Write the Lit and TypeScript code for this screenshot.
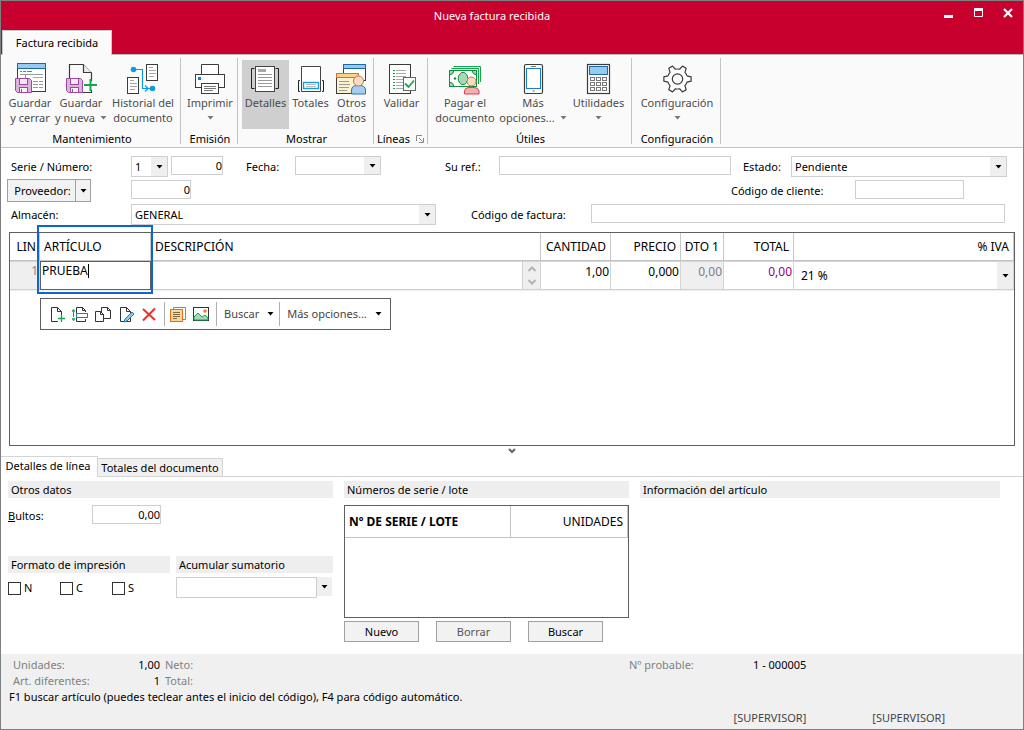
import { LitElement, html, svg, css, nothing, TemplateResult, SVGTemplateResult } from "lit";
import { customElement, property } from "lit/decorators.js";

/** Outline of a cog with six teeth around (cx, cy). */
function gearPath(cx: number, cy: number): string {
  const at = (r: number, deg: number) => {
    const a = (deg * Math.PI) / 180;
    return `${(cx + r * Math.cos(a)).toFixed(2)} ${(cy + r * Math.sin(a)).toFixed(2)}`;
  };
  let d = "";
  for (let t = 0; t < 360; t += 60) {
    d += `${t ? "A10 10 0 0 1" : "M"}${at(10, t - 18)}L${at(13.8, t - 9)}L${at(13.8, t + 9)}L${at(10, t + 18)}`;
  }
  return `${d}A10 10 0 0 1 ${at(10, -18)}Z`;
}

const floppy = svg`
  <g stroke="#9a4a9c" stroke-width="1">
    <path d="M1.500 16.500H15.500L17.500 18.500V30.500H3.500L1.500 28.500Z" fill="#ddb3dd"/>
    <rect x="5.500" y="16.500" width="8" height="6" fill="#f4e6f4"/>
    <rect x="5.500" y="25.500" width="8" height="5" fill="#f4f4f4"/>
    <path d="M7.500 27V30"/>
  </g>`;

const icons: Record<string, SVGTemplateResult> = {
  saveClose: svg`
    <rect x="3.500" y="1.500" width="28" height="28" fill="#fff" stroke="#3b3b3b"/>
    <rect x="3.500" y="1.500" width="28" height="5" fill="#97caf0" stroke="#1c68a8"/>
    <path d="M6 9.500H8M9 9.500H12M13 9.500H18" stroke="#777"/>
    <path d="M6 12.500H29" stroke="#999"/><path d="M11.500 12V17" stroke="#999"/>
    <path d="M19 15.500H29" stroke="#aaa"/>
    <path d="M19 19.500H24M25 19.500H29M19 22.500H24M25 22.500H29M19 25.500H24M25 25.500H29" stroke="#999"/>
    ${floppy}`,
  saveNew: svg`
    <path d="M4.500 16V2.500H18L26.500 11V19M18 30.500H26.500V28" fill="none" stroke="#3b3b3b" stroke-width="1.200"/>
    <path d="M18.500 2.500V10.500H26.500" fill="#eee" stroke="#3b3b3b" stroke-width="1.200"/>
    ${floppy}
    <path d="M25.500 17V29M19 23H32" stroke="#12a84a" stroke-width="2"/>`,
  history: svg`
    <rect x="19.500" y="2.500" width="11" height="16" fill="#fff" stroke="#3b3b3b"/>
    <path d="M22 5.500H26M22 8.500H29M22 11.500H29M22 14.500H27" stroke="#a5a5a5"/>
    <rect x="0.500" y="15.500" width="11" height="16" fill="#fff" stroke="#3b3b3b"/>
    <path d="M3 18.500H7M3 21.500H10M3 24.500H10M3 27.500H8" stroke="#a5a5a5"/>
    <circle cx="6.500" cy="7.500" r="2.800" fill="#0a9be6"/>
    <circle cx="25.500" cy="26.500" r="2.800" fill="#0a9be6"/>
    <path d="M7 7.500H15.500V26.500H25M18 23.500L21 26.500L18 29.500" fill="none" stroke="#0a9be6" stroke-width="1.200"/>`,
  print: svg`
    <path d="M7.500 12V2.500H24.500V12" fill="#fff" stroke="#3b3b3b"/>
    <rect x="1.500" y="12.500" width="29" height="13" fill="#fff" stroke="#3b3b3b"/>
    <rect x="4" y="15" width="3" height="3" fill="#1a80c4"/>
    <rect x="7.500" y="21.500" width="17" height="10" fill="#fff" stroke="#3b3b3b"/>
    <path d="M10 24.500H22M10 26.500H22M10 28.500H19" stroke="#777"/>`,
  details: svg`
    <path d="M5.500 6.500H2.500V26.500H5.500M26.500 6.500H29.500V26.500H26.500" fill="none" stroke="#222"/>
    <rect x="6.500" y="4.500" width="19" height="25" fill="#fff" stroke="#444"/>
    <rect x="9" y="7" width="8" height="3" fill="#a9a9a9"/>
    <path d="M9 12.500H23M9 15.500H23M9 18.500H23M9 21.500H23M9 24.500H23" stroke="#999"/>`,
  totals: svg`
    <path d="M7.500 29.500V4.500H26.500V29.500Z" fill="#fff" stroke="#444"/>
    <path d="M6 18.500H4.500V29.500H6M28 18.500H29.500V29.500H28" fill="none" stroke="#222"/>
    <rect x="9.500" y="20.500" width="15" height="6" fill="#fff" stroke="#1a9be0" stroke-width="1.400"/>
    <path d="M12 22.500H22M12 24.500H22" stroke="#bbb"/>`,
  other: svg`
    <rect x="8.500" y="2.500" width="22" height="16" fill="#fff" stroke="#3b3b3b"/>
    <rect x="8.500" y="2.500" width="22" height="4" fill="#97caf0" stroke="#1c68a8"/>
    <rect x="1.500" y="11.500" width="21" height="20" fill="#fdf1cf" stroke="#3b3b3b"/>
    <rect x="1.500" y="11.500" width="22" height="4" fill="#fbcf8c" stroke="#e0701c"/>
    <path d="M4 19.500H14M4 22.500H15M4 25.500H14M4 28.500H12" stroke="#999"/>
    <path d="M16.500 32V28Q17 23.500 22 23.500H25Q30 23.500 30.500 28V32Z" fill="#a5cdf0" stroke="#2a75b5"/>
    <circle cx="23.500" cy="19" r="5" fill="#fbdcc0" stroke="#c07a4a"/>`,
  validate: svg`
    <rect x="4.500" y="2.500" width="21" height="29" fill="#fff" stroke="#3b3b3b"/>
    <path d="M8 8.500H10M8 14.500H10M8 20.500H10M8 26.500H10" stroke="#12a84a"/>
    <path d="M8 11.500H10M8 17.500H10M8 23.500H10" stroke="#d03030"/>
    <path d="M11 8.500H21M11 11.500H21M11 14.500H21M11 17.500H18M11 20.500H18M11 23.500H18M11 26.500H18" stroke="#aaa"/>
    <rect x="18.500" y="15.500" width="12" height="13" fill="#fff" stroke="#666"/>
    <path d="M20 21.500L23.500 25L29 18.500" fill="none" stroke="#12a84a" stroke-width="1.800"/>`,
  pay: svg`
    <path d="M4.500 4.500H31.500V20M2.500 6.500H29.500V22" fill="none" stroke="#12a84a"/>
    <rect x="0.500" y="8.500" width="27" height="16" fill="#fff" stroke="#0f8f3e"/>
    <path d="M0.500 8.500H5Q4.500 12.500 0.500 13ZM27.500 8.500H23Q23.500 12.500 27.500 13ZM0.500 24.500H5Q4.500 20.500 0.500 20Z" fill="#9ed3ae" stroke="#0f8f3e"/>
    <circle cx="6" cy="16.500" r="1.200" fill="#0f8f3e"/>
    <ellipse cx="14" cy="16.500" rx="4.800" ry="6.200" fill="#a7d7b4" stroke="#0f8f3e"/>
    <path d="M15.500 32V29Q16 25.500 20 25.500H25Q29.500 25.500 30 29V32Z" fill="#f4b0b0" stroke="#d84545"/>
    <circle cx="22.500" cy="19.500" r="4.500" fill="#fbdcc0" stroke="#c07a4a"/>`,
  phone: svg`
    <rect x="7.500" y="2.500" width="18" height="29" rx="1.500" fill="#fff" stroke="#3b3b3b" stroke-width="1.200"/>
    <rect x="9.500" y="6.500" width="14" height="20" fill="#fff" stroke="#1a80c4"/>
    <path d="M14 4.500H19M15.500 29H18" stroke="#777"/>`,
  calc: svg`
    <rect x="5.500" y="2.500" width="22" height="29" fill="#fff" stroke="#3b3b3b" stroke-width="1.200"/>
    <rect x="7.500" y="4.500" width="18" height="8" fill="#97caf0" stroke="#1c68a8"/>
    <g fill="#fff" stroke="#777">${[15.5, 20.5, 25.5].map((y) => [8.5, 14.5, 20.5].map((x) => svg`<rect x=${x} y=${y} width="4" height="3"/>`))}</g>`,
  gear: svg`
    <path d=${gearPath(16.5, 17)} fill="#fff" stroke="#3b3b3b" stroke-width="1.200" stroke-linejoin="round"/>
    <circle cx="16.500" cy="17" r="5.200" fill="#fafafa" stroke="#3b3b3b" stroke-width="1.200"/>`,
};

const page = svg`<path d="M2.500 1.500H8.500L12.500 5.500V15.500H2.500Z" fill="#fff" stroke="#333"/><path d="M8.500 1.500V5.500H12.500" fill="none" stroke="#333"/>`;
const smallIcons: Record<string, SVGTemplateResult> = {
  add: svg`${page}<rect x="9" y="9" width="7" height="7" fill="#fff"/><path d="M12.500 9V16M9 12.500H16" stroke="#12a84a" stroke-width="1.300"/>`,
  insert: svg`<path d="M4.500 7V1.500H10.500L13.500 4.500V6M4.500 12V15.500H13.500V13" fill="none" stroke="#333"/><path d="M10.500 1.500V4.500H13.500" fill="none" stroke="#333"/>
    <rect x="4.500" y="7.500" width="11" height="4" fill="#fff" stroke="#1a80c4"/><path d="M1.500 6V11" stroke="#12a84a"/><path d="M0 5.500H3L1.500 3ZM0 12.500H3L1.500 15Z" fill="#12a84a" stroke="#12a84a" stroke-width="0.600"/>`,
  copy: svg`<path d="M6.500 1.500H12.500L15.500 4.500V12.500H6.500Z" fill="#fff" stroke="#333"/><path d="M12.500 1.500V4.500H15.500" fill="none" stroke="#333"/>
    <path d="M0.500 5.500H5.500L8.500 8.500V15.500H0.500Z" fill="#fff" stroke="#333"/><path d="M5.500 5.500V8.500H8.500" fill="none" stroke="#333"/>`,
  edit: svg`${page}<path d="M14 6L7 13L6 16L9 15L16 8Z" fill="#8cc6f0" stroke="#1a80c4"/>`,
  remove: svg`<path d="M2 3L14 14M14 2.500L2 14.500" stroke="#e8302c" stroke-width="2"/>`,
  notes: svg`<path d="M3.500 3V1.500H15.500V13.500H13" fill="#fff" stroke="#e0701c"/><rect x="0.500" y="3.500" width="12" height="12" fill="#fbd694" stroke="#e0701c"/><path d="M3 6.500H10M3 8.500H10M3 10.500H10M3 12.500H7" stroke="#7d6a45"/>`,
  image: svg`<rect x="0.500" y="1.500" width="15" height="13" fill="#fff" stroke="#333"/><path d="M1 11L5 7L9 11L12 9L15 12V14H1Z" fill="#a5dab5" stroke="#12a84a"/><circle cx="12" cy="5" r="1.800" fill="#f08020"/>`,
};

const arrow = () =>
  html`<svg class="arrow" width="7" height="4" viewBox="0 0 7 4" aria-hidden="true"><path d="M0.500 0H6.500L3.500 3.500Z" fill="currentColor" /></svg>`;

/** Large ribbon command: icon over one or two lines of text. */
@customElement("ribbon-button")
export class RibbonButton extends LitElement {
  @property() icon = "";
  @property() first = "";
  @property() second = "";
  @property({ type: Boolean }) menu = false;
  @property({ type: Boolean }) active = false;

  static styles = css`
    :host { display: block; }
    button {
      display: flex; flex-direction: column; align-items: center;
      width: 100%; height: 69px; padding: 2px 0 0; border: 0;
      background: none; color: #4c4c4c;
      font: 11px/15px "Noto Sans", "Open Sans", sans-serif; white-space: nowrap;
    }
    button.active { background: #cfcfcf; }
    svg.icon { display: block; flex: none; }
    .line { display: flex; align-items: center; justify-content: center; gap: 5px; height: 15px; }
    .arrow { color: #777; }
  `;

  render() {
    return html`<button type="button" class=${this.active ? "active" : ""} aria-pressed=${this.active}>
      <svg class="icon" width="33" height="33" viewBox="0 0 33 33" aria-hidden="true">${icons[this.icon]}</svg>
      <span class="line">${this.first}</span>
      <span class="line">${this.second}${this.menu ? arrow() : nothing}</span>
    </button>`;
  }
}

interface Command { icon: string; first: string; second?: string; menu?: boolean; active?: boolean; }
interface Group { name: string; cls: string; launcher?: boolean; commands: Command[]; }

const groups: Group[] = [
  { name: "Mantenimiento", cls: "g-main", commands: [
    { icon: "saveClose", first: "Guardar", second: "y cerrar" },
    { icon: "saveNew", first: "Guardar", second: "y nueva", menu: true },
    { icon: "history", first: "Historial del", second: "documento" }] },
  { name: "Emisión", cls: "g-one", commands: [{ icon: "print", first: "Imprimir", menu: true }] },
  { name: "Mostrar", cls: "g-show", commands: [
    { icon: "details", first: "Detalles", active: true },
    { icon: "totals", first: "Totales" },
    { icon: "other", first: "Otros", second: "datos" }] },
  { name: "Líneas", cls: "g-lines", launcher: true, commands: [{ icon: "validate", first: "Validar" }] },
  { name: "Útiles", cls: "g-tools", commands: [
    { icon: "pay", first: "Pagar el", second: "documento" },
    { icon: "phone", first: "Más", second: "opciones...", menu: true },
    { icon: "calc", first: "Utilidades", menu: true }] },
  { name: "Configuración", cls: "g-conf", commands: [{ icon: "gear", first: "Configuración", menu: true }] },
];

@customElement("app-root")
export class AppRoot extends LitElement {
  static styles = css`
    :host {
      display: flex; flex-direction: column; box-sizing: border-box; min-height: 100vh;
      border: 1px solid #7f7f7f; background: #fff; color: #000;
      font: 11px/16px "Noto Sans", "Open Sans", sans-serif;
    }
    *, *::before, *::after { box-sizing: border-box; }
    button, input, select { font: inherit; color: inherit; border-radius: 0; margin: 0; }
    .arrow { display: block; flex: none; }

    .top { background: #c8002d; color: #fff; border-bottom: 1px solid #b8b8b8; }
    .title-row { display: grid; grid-template-columns: 1fr auto 1fr; height: 29px; align-items: center; }
    .title { grid-column: 2; margin: 0; font-size: 11px; font-weight: 400; padding-right: 40px; }
    .window-buttons { justify-self: end; display: flex; gap: 12px; padding: 0 6px 6px 0; }
    .window-buttons button { width: 18px; height: 16px; padding: 0; border: 0; background: none; display: grid; place-items: center; }
    .ribbon-tab { display: block; margin: 0 0 -1px 1px; height: 25px; width: 110px; padding: 0; border: 1px solid #c8c8c8; border-bottom: 0; background: #fafafa; color: #000; }

    .ribbon { display: flex; height: 93px; padding-top: 3px; background: #fafafa; border-bottom: 1px solid #c3c3c3; }
    .group { display: flex; flex-direction: column; height: 86px; padding: 2px 2px 0 4px; border-right: 1px solid #c3c3c3; }
    .commands { display: grid; }
    .g-main .commands { grid-template-columns: 50px 52px 72px; }
    .g-main { padding-right: 1px; }
    .g-one .commands { grid-template-columns: 50px; }
    .g-show .commands { grid-template-columns: 47px 43px 39px; }
    .g-lines .commands { grid-template-columns: 47px; }
    .g-tools .commands { grid-template-columns: 66px 70px 61px; }
    .g-conf .commands { grid-template-columns: 82px; }
    .group-name { display: flex; justify-content: center; align-items: center; gap: 6px; height: 16px; margin-top: 2px; white-space: nowrap; }
    .g-lines .group-name { margin-left: -2px; }
    .launcher { width: 8px; height: 8px; padding: 0; border: 0; background: none; display: block; }
    .launcher svg { display: block; }

    .form { display: flex; flex-direction: column; gap: 3px; padding: 8px 16px 0 6px; }
    .row { display: flex; align-items: center; height: 21px; }
    .row label { white-space: nowrap; flex: none; }
    .l-first { width: 120px; margin-left: 4px; }
    .l-date { width: 49px; margin-left: 23px; }
    .l-ref { width: 54px; margin-left: 64px; }
    .l-state { width: 48px; margin-left: 12px; }
    .l-invoice { width: 120px; margin-left: 35px; }
    .l-client { width: 124px; margin-left: auto; }
    .field { height: 19px; padding: 0 2px; border: 1px solid #cfcfcf; background: #fff; outline: 0; min-width: 0; line-height: 16px; }
    .row > .field { align-self: flex-start; }
    .num { text-align: right; padding-right: 0; }
    .w-number { width: 52px; margin-left: 3px; }
    .w-supplier { width: 60px; margin-left: 40px; }
    .w-client { width: 109px; margin-right: 43px; }
    .grow { flex: 1; }
    .w-invoice { margin-right: 2px; }

    .combo { display: grid; grid-template-columns: 1fr 16px; height: 21px; border: 1px solid #cfcfcf; background: #fff; flex: none; }
    .combo select { grid-area: 1 / 1 / 2 / 3; width: 100%; min-width: 0; appearance: none; border: 0; background: none; padding: 0 16px 0 3px; outline: 0; }
    .combo .drop { grid-area: 1 / 2; background: #efefef; display: grid; place-items: center; pointer-events: none; }
    .w-series { width: 37px; }
    .w-date { width: 86px; height: 19px; align-self: flex-start; }
    .w-state { width: 216px; }
    .w-store { width: 305px; }
    .split { display: flex; height: 23px; flex: none; border: 1px solid #a0a0a0; background: #f2f2f2; }
    .split button { border: 0; background: none; padding: 0; display: grid; place-items: center; }
    .split .main { width: 67px; padding-left: 2px; }
    .split .more { width: 15px; border-left: 1px solid #a0a0a0; }

    .lines { flex: 1; margin: 7px 8px 0; border: 1px solid #5f5f5f; min-height: 200px; }
    table { border-collapse: separate; border-spacing: 0; table-layout: fixed; width: 100%; }
    th { font-weight: 400; font-size: 12px; padding: 0; }
    td { padding: 0; }
    .lines th { height: 28px; text-align: right; padding-right: 4px; border-right: 1px solid #c8c8c8; border-bottom: 1px solid #c3c3c3; white-space: nowrap; }
    .lines th.left { text-align: left; padding-left: 4px; padding-right: 0; }
    .lines th.lin { padding-right: 3px; }
    .lines td { height: 29px; border: 1px solid #d4d4d4; border-left: 0; border-bottom: 1px solid #cfcfcf; font-size: 12px; vertical-align: top; }
    .lines tbody tr { background: #fff; }
    .lines .under td { height: 1px; background: #efefef; border: 0; }
    .c-lin { width: 30px; } .c-art { width: 111px; } .c-qty { width: 70px; } .c-price { width: 70px; }
    .c-dto { width: 43px; } .c-total { width: 70px; } .c-iva { width: 220px; }
    .lines td.lin { background: #efefef; color: #8a8a8a; text-align: right; line-height: 18px; padding-right: 1px; }
    .lines td.article { border: 1px solid #5f5f5f; }
    .lines td.grey { background: #efefef; color: #808080; }
    .lines td.purple { color: #8b008b; }
    .cell { width: 100%; height: 18px; border: 0; padding: 0 1px; background: none; outline: 0; text-align: right; display: block; }
    .typing { display: flex; align-items: center; height: 18px; padding-left: 1px; }
    .typing input { field-sizing: content; min-width: 8px; border: 0; padding: 0; background: none; outline: 0; height: 16px; }
    .typing i { width: 1px; height: 14px; background: #000; }
    .desc { display: grid; grid-template-columns: 1fr 17px; height: 27px; background: #efefef; }
    .desc input { border: 0; border-right: 1px solid #cfcfcf; background: #fff; height: 27px; min-width: 0; outline: 0; }
    .spin { display: grid; grid-template-rows: 1fr 1fr; }
    .spin button { border: 0; background: none; padding: 0; display: grid; place-items: center; }
    .tax { border: 0; height: 27px; }
    .tax select { padding-left: 7px; }
    .marked { position: relative; }
    .marker { position: absolute; left: -3px; top: -8px; width: 116px; height: 69px; border: 2px solid #0a66d2; pointer-events: none; }

    .line-tools { display: flex; align-items: center; width: fit-content; height: 32px; margin: 7px 0 0 30px; padding: 0 8px; border: 1px solid #5f5f5f; background: #fff; color: #444; }
    .line-tools button { border: 0; background: none; padding: 0; display: flex; align-items: center; height: 24px; }
    .line-tools .arrow { color: #000; }
    .tool-set { display: flex; gap: 7px; padding: 0 7px 0 0; }
    .tool-set + .tool-set, .text-tool { border-left: 1px solid #b0b0b0; }
    .tool-set + .tool-set { padding-left: 5px; padding-right: 7px; }
    .text-tool { padding: 0 5px 0 7px; }
    .text-tool:last-child { padding-right: 0; }
    .line-tools .text-tool button { gap: 8px; }

    .collapse { align-self: center; height: 10px; width: 20px; padding: 0; border: 0; background: none; display: grid; place-items: center; }
    .tabs { display: flex; align-items: flex-end; border-bottom: 1px solid #d4d4d4; height: 21px; }
    .tabs button { padding: 0; background: #f0f0f0; border: 1px solid #d4d4d4; border-bottom: 0; height: 18px; width: 126px; margin-left: -1px; white-space: nowrap; }
    .tabs button.current { background: #fff; width: 97px; height: 21px; margin: 0 0 -1px; border-left: 0; padding: 0 2px 2px 0; }

    .panels { display: grid; grid-template-columns: 325px 285px 1fr; column-gap: 11px; padding: 4px 23px 12px 7px; }
    h3 { margin: 0; height: 17px; padding: 0 3px; font-size: 11px; line-height: 18px; font-weight: 400; background: #eee; white-space: nowrap; }
    .bultos { display: flex; height: 19px; margin-top: 7px; }
    .bultos label { width: 84px; line-height: 22px; }
    .w-bultos { width: 69px; }
    .halves { display: grid; grid-template-columns: 162px 157px; column-gap: 6px; margin-top: 32px; }
    .checks { display: grid; grid-template-columns: repeat(3, 52px); margin-top: 7px; }
    .checks label { display: flex; align-items: center; gap: 3px; height: 16px; }
    .checks input { appearance: none; width: 13px; height: 13px; border: 1px solid #333; background: #fff; }
    .sum { display: grid; grid-template-columns: 141px 15px; margin-top: 4px; height: 21px; }
    .sum select { grid-area: 1 / 1; appearance: none; border: 1px solid #cfcfcf; background: #fff; }
    .sum .drop { grid-area: 1 / 2; height: 19px; background: #efefef; display: grid; place-items: center; }
    .serial-box { margin-top: 7px; height: 113px; border: 1px solid #5f5f5f; }
    .serial-box th { height: 32px; text-align: right; padding: 0 4px; border-right: 1px solid #c3c3c3; border-bottom: 1px solid #c3c3c3; }
    .serial-box th.strong { text-align: left; font-weight: 700; }
    .c-serial { width: 166px; }
    .actions { display: flex; gap: 17px; margin-top: 3px; }
    .actions button { width: 75px; height: 21px; padding: 1px 0 0; border: 1px solid #a0a0a0; background: #f2f2f2; }
    .actions button:disabled { color: #555; }

    .status { background: #f0f0f0; padding: 3px 0 2px 8px; color: #808080; height: 75px; }
    .status b { font-weight: 400; color: #000; }
    .sums { display: grid; grid-template-columns: 78px 69px 469px 124px 1fr; padding-left: 4px; }
    .sums b.right { text-align: right; }
    .sums .pad { padding-left: 5px; }
    .hint { margin: 0; color: #000; }
    .users { display: flex; justify-content: flex-end; gap: 66px; margin: 5px 78px 0 0; color: #444; }
  `;

  private combo(id: string, cls: string, value = "", label = ""): TemplateResult {
    return html`<span class="combo ${cls}">
      <select id=${id} aria-label=${label || nothing}><option>${value}</option></select>
      <span class="drop">${arrow()}</span>
    </span>`;
  }

  private tool(icon: string, label: string): TemplateResult {
    return html`<button type="button" aria-label=${label}><svg width="16" height="17" viewBox="0 0 16 17" aria-hidden="true">${smallIcons[icon]}</svg></button>`;
  }

  render() {
    return html`
      <header class="top">
        <div class="title-row">
          <h1 class="title">Nueva factura recibida</h1>
          <div class="window-buttons">
            <button type="button" aria-label="Minimizar"><svg width="9" height="10"><path d="M0 7H9V10H0Z" fill="#fff" /></svg></button>
            <button type="button" aria-label="Maximizar"><svg width="9" height="9"><path d="M0.500 1V8.500H8.500V1" fill="none" stroke="#fff" /><path d="M0 0H9V3H0Z" fill="#fff" /></svg></button>
            <button type="button" aria-label="Cerrar"><svg width="10" height="10"><path d="M1 1L9 9M9 1L1 9" stroke="#fff" stroke-width="2.200" /></svg></button>
          </div>
        </div>
        <button type="button" class="ribbon-tab">Factura recibida</button>
      </header>

      <nav class="ribbon">
        ${groups.map((g) => html`<section class="group ${g.cls}">
          <div class="commands">${g.commands.map((c) => html`<ribbon-button .icon=${c.icon} .first=${c.first} .second=${c.second ?? ""} .menu=${!!c.menu} .active=${!!c.active}></ribbon-button>`)}</div>
          <div class="group-name">${g.name}${g.launcher
            ? html`<button type="button" class="launcher" aria-label="Opciones de líneas"><svg width="8" height="8"><path d="M0.500 6V0.500H6M3 3L6.500 6.500M7.500 3V7.500H3" fill="none" stroke="#888" /></svg></button>`
            : nothing}</div>
        </section>`)}
      </nav>

      <form class="form" @submit=${(e: Event) => e.preventDefault()}>
        <div class="row">
          <label class="l-first" for="serie">Serie / Número:</label>
          ${this.combo("serie", "w-series", "1")}
          <input class="field num w-number" aria-label="Número" value="0" />
          <label class="l-date" for="fecha">Fecha:</label>
          ${this.combo("fecha", "w-date")}
          <label class="l-ref" for="ref">Su ref.:</label>
          <input class="field grow" id="ref" />
          <label class="l-state" for="estado">Estado:</label>
          ${this.combo("estado", "w-state", "Pendiente")}
        </div>
        <div class="row">
          <span class="split">
            <button type="button" class="main">Proveedor:</button>
            <button type="button" class="more" aria-label="Más acciones de proveedor">${arrow()}</button>
          </span>
          <input class="field num w-supplier" aria-label="Proveedor" value="0" />
          <label class="l-client" for="cliente">Código de cliente:</label>
          <input class="field w-client" id="cliente" />
        </div>
        <div class="row">
          <label class="l-first" for="almacen">Almacén:</label>
          ${this.combo("almacen", "w-store", "GENERAL")}
          <label class="l-invoice" for="factura">Código de factura:</label>
          <input class="field grow w-invoice" id="factura" />
        </div>
      </form>

      <section class="lines">
        <table>
          <colgroup><col class="c-lin" /><col class="c-art" /><col /><col class="c-qty" /><col class="c-price" /><col class="c-dto" /><col class="c-total" /><col class="c-iva" /></colgroup>
          <thead><tr>
            <th class="lin">LIN</th>
            <th class="left marked">ARTÍCULO<span class="marker"></span></th>
            <th class="left">DESCRIPCIÓN</th>
            <th>CANTIDAD</th><th>PRECIO</th><th>DTO 1</th><th>TOTAL</th><th>% IVA</th>
          </tr></thead>
          <tbody>
            <tr>
              <td class="lin">1</td>
              <td class="article"><span class="typing"><input aria-label="Artículo" size="6" value="PRUEBA" /><i></i></span></td>
              <td><span class="desc"><input aria-label="Descripción" />
                <span class="spin">
                  <button type="button" aria-label="Subir"><svg width="8" height="6"><path d="M0.500 5L4 1.500L7.500 5" fill="none" stroke="#b4b4b4" stroke-width="2" /></svg></button>
                  <button type="button" aria-label="Bajar"><svg width="8" height="6"><path d="M0.500 1L4 4.500L7.500 1" fill="none" stroke="#b4b4b4" stroke-width="2" /></svg></button>
                </span></span></td>
              <td><input class="cell" aria-label="Cantidad" value="1,00" /></td>
              <td><input class="cell" aria-label="Precio" value="0,000" /></td>
              <td class="grey"><input class="cell" aria-label="Descuento 1" value="0,00" /></td>
              <td class="purple"><input class="cell" aria-label="Total" value="0,00" /></td>
              <td>${this.combo("iva", "tax", "21 %", "% IVA")}</td>
            </tr>
            <tr class="under"><td colspan="8"></td></tr>
          </tbody>
        </table>
        <div class="line-tools" role="toolbar">
          <span class="tool-set">
            ${this.tool("add", "Nueva línea")}${this.tool("insert", "Insertar línea")}${this.tool("copy", "Duplicar")}${this.tool("edit", "Editar")}${this.tool("remove", "Borrar línea")}
          </span>
          <span class="tool-set">${this.tool("notes", "Notas")}${this.tool("image", "Imagen")}</span>
          <span class="text-tool"><button type="button">Buscar ${arrow()}</button></span>
          <span class="text-tool"><button type="button">Más opciones... ${arrow()}</button></span>
        </div>
      </section>

      <button type="button" class="collapse" aria-label="Contraer detalles"><svg width="8" height="6"><path d="M1 1L4 4L7 1" fill="none" stroke="#666" stroke-width="2" /></svg></button>

      <div class="tabs" role="tablist">
        <button type="button" role="tab" aria-selected="true" class="current">Detalles de línea</button>
        <button type="button" role="tab" aria-selected="false">Totales del documento</button>
      </div>
      <div class="panels">
        <section>
          <h3>Otros datos</h3>
          <div class="bultos"><label for="bultos"><u>B</u>ultos:</label><input class="field num w-bultos" id="bultos" value="0,00" /></div>
          <div class="halves">
            <div>
              <h3>Formato de impresión</h3>
              <div class="checks">${["N", "C", "S"].map((k) => html`<label><input type="checkbox" />${k}</label>`)}</div>
            </div>
            <div>
              <h3>Acumular sumatorio</h3>
              <div class="sum"><select aria-label="Acumular sumatorio"><option></option></select><span class="drop">${arrow()}</span></div>
            </div>
          </div>
        </section>
        <section>
          <h3>Números de serie / lote</h3>
          <div class="serial-box">
            <table>
              <colgroup><col class="c-serial" /><col /></colgroup>
              <thead><tr><th class="strong">Nº DE SERIE / LOTE</th><th>UNIDADES</th></tr></thead>
            </table>
          </div>
          <div class="actions">
            <button type="button">Nuevo</button><button type="button" disabled>Borrar</button><button type="button">Buscar</button>
          </div>
        </section>
        <section><h3>Información del artículo</h3></section>
      </div>

      <footer class="status">
        <div class="sums">
          <span>Unidades:</span><b class="right">1,00</b><span class="pad">Neto:</span><span>Nº probable:</span><b>1 - 000005</b>
          <span>Art. diferentes:</span><b class="right">1</b><span class="pad">Total:</span>
        </div>
        <p class="hint">F1 buscar artículo (puedes teclear antes el inicio del código), F4 para código automático.</p>
        <div class="users"><span>[SUPERVISOR]</span><span>[SUPERVISOR]</span></div>
      </footer>
    `;
  }
}
